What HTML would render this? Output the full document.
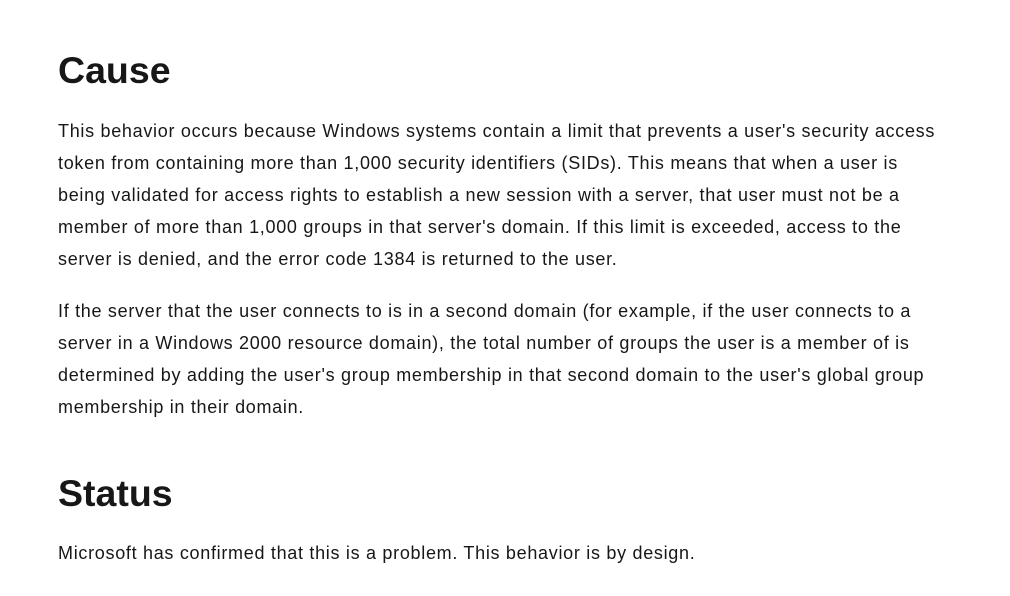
<!DOCTYPE html>
<html><head><meta charset="utf-8"><style>
html,body{margin:0;padding:0;background:#fff;width:1010px;height:596px;overflow:hidden}
body{font-family:"Liberation Sans","DejaVu Sans",sans-serif;color:#171717;position:relative}
h1{position:absolute;left:58px;margin:0;font-size:37.5px;font-weight:bold;line-height:48px}
p{position:absolute;left:58px;margin:0;font-size:18px;letter-spacing:0.7px;line-height:32px;white-space:nowrap}
</style></head><body>
<h1 style="top:46px">Cause</h1>
<p style="top:115px">This behavior occurs because Windows systems contain a limit that prevents a user's security access<br>token from containing more than 1,000 security identifiers (SIDs). This means that when a user is<br>being validated for access rights to establish a new session with a server, that user must not be a<br>member of more than 1,000 groups in that server's domain. If this limit is exceeded, access to the<br>server is denied, and the error code 1384 is returned to the user.</p>
<p style="top:295px">If the server that the user connects to is in a second domain (for example, if the user connects to a<br>server in a Windows 2000 resource domain), the total number of groups the user is a member of is<br>determined by adding the user's group membership in that second domain to the user's global group<br>membership in their domain.</p>
<h1 style="top:469px">Status</h1>
<p style="top:537px">Microsoft has confirmed that this is a problem. This behavior is by design.</p>
</body></html>
